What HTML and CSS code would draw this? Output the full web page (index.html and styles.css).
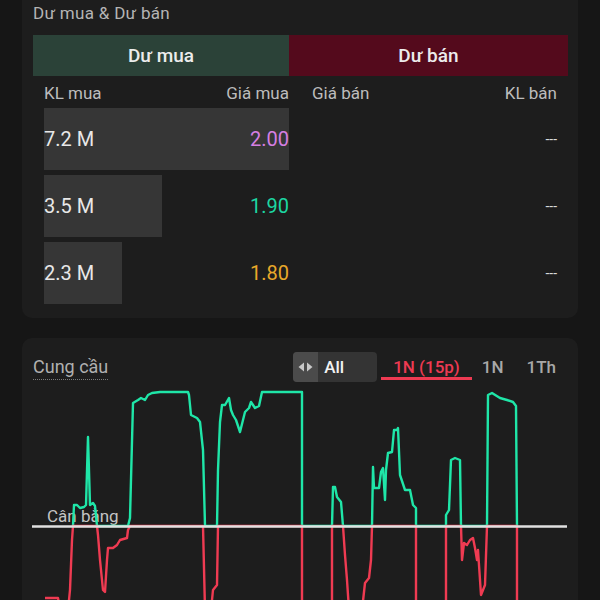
FILE: index.html
```html
<!DOCTYPE html>
<html lang="vi">
<head>
  <meta charset="UTF-8">
  <meta name="viewport" content="width=device-width, initial-scale=1.0">
  <title>Dư mua & Dư bán</title>
  <link rel="stylesheet" href="styles.css">
</head>
<body>
  <div class="page">
    <section class="card depth">
      <h2 class="card-title">Dư mua &amp; Dư bán</h2>
      <div class="side-tabs">
        <div class="side-tab buy">Dư mua</div>
        <div class="side-tab sell">Dư bán</div>
      </div>
      <div class="book">
        <div class="book-head">
          <span>KL mua</span>
          <span>Giá mua</span>
        </div>
        <div class="book-head">
          <span>Giá bán</span>
          <span>KL bán</span>
        </div>

        <div class="book-row">
          <div class="bar" style="width: 100%"></div>
          <div class="row-text">
            <span class="vol">7.2 M</span>
            <span class="price violet">2.00</span>
          </div>
        </div>
        <div class="book-row empty">
          <span></span>
          <span class="dash">---</span>
        </div>

        <div class="book-row">
          <div class="bar" style="width: 48%"></div>
          <div class="row-text">
            <span class="vol">3.5 M</span>
            <span class="price teal">1.90</span>
          </div>
        </div>
        <div class="book-row empty">
          <span></span>
          <span class="dash">---</span>
        </div>

        <div class="book-row">
          <div class="bar" style="width: 32%"></div>
          <div class="row-text">
            <span class="vol">2.3 M</span>
            <span class="price amber">1.80</span>
          </div>
        </div>
        <div class="book-row empty">
          <span></span>
          <span class="dash">---</span>
        </div>
      </div>
    </section>

    <section class="card flow">
      <div class="flow-head">
        <span class="flow-title">Cung cầu</span>
        <div class="controls">
          <div class="toggle">
            <span class="toggle-arrows">
              <svg width="17" height="10" viewBox="0 0 17 10">
                <path d="M7 0.5 L1.5 5 L7 9.5 Z" fill="#c9c9c9"/>
                <path d="M10 0.5 L15.5 5 L10 9.5 Z" fill="#c9c9c9"/>
              </svg>
            </span>
            <span class="toggle-label">All</span>
          </div>
          <span class="range active">1N (15p)</span>
          <span class="range day">1N</span>
          <span class="range month">1Th</span>
        </div>
      </div>
      <svg class="chart" width="556" height="230" viewBox="22 384 556 230">
        <text x="47" y="522" class="chart-label">Cân bằng</text>
        <path class="line-buy" d="M73,526 L74,505 L77,505 L80,508 L84,507 L86,505 L88,437 L90,505 L93,503 L95,506 L97,526 L128,526 L130,518 L133,403 L138,400 L141,398 L145,400 L148,395 L152,393 L160,392 L188,392 L189,395 L191,415 L197,418 L200,422 L203,450 L205,526 L217,526 L218,470 L220,422 L222,405 L225,405 L229,398 L231,410 L233,415 L236,420 L240,432 L243,420 L245,412 L249,408 L251,402 L255,408 L259,406 L262,392 L302,392 L302,526 L332,526 L333,487 L335,487 L337,497 L341,502 L343,526 L372,526 L373,467 L374,488 L379,488 L381,472 L383,468 L385,500 L386,470 L388,453 L392,452 L394,430 L397,430 L398,428 L400,475 L405,490 L410,490 L413,505 L416,508 L416,526 L446,526 L446,515 L449,510 L451,460 L455,458 L460,460 L461,526 L487,526 L488,395 L492,393 L500,398 L507,400 L513,402 L516,406 L517,526"/>
        <path class="line-sell" d="M45,598 L58,598 L60,610"/>
        <path class="line-sell" d="M68,610 L70,590 L72,540 L73,526 L97,526 L98,535 L100,560 L103,590 L105,592 L107,560 L108,548 L113,548 L117,545 L120,540 L127,538 L128,530 L130,526 L203,526 L205,610 L211,610 L213,590 L217,585 L218,526 L302,526 L302,610 L332,610 L332,526 L343,526 L345,555 L347,580 L349,610 L362,610 L365,583 L369,578 L371,560 L372,526 L416,526 L416,610 L446,610 L446,526 L461,526 L462,560 L464,543 L467,545 L470,540 L473,538 L475,548 L477,560 L478,550 L480,580 L481,595 L483,590 L485,585 L487,526 L517,526 L517,610"/>
        <line x1="32" y1="526.5" x2="567" y2="526.5" class="baseline"/>
      </svg>
    </section>
  </div>
</body>
</html>
```

FILE: styles.css
```css
body {
  margin: 0;
  background: #161616;
  font-family: Roboto, 'Noto Sans', sans-serif;
  color: #e6e6e6;
}
.page {
  padding: 0 22px;
}
.card {
  background: #1d1d1d;
}
.depth {
  padding: 0 10px 14px 11px;
  border-radius: 0 0 10px 10px;
}
.card-title {
  margin: 0;
  font-size: 17px;
  font-weight: 400;
  line-height: 26px;
  letter-spacing: 0.3px;
  color: #b4b4b4;
}
.side-tabs {
  display: grid;
  grid-template-columns: 256px 1fr;
  margin-top: 9px;
}
.side-tab {
  height: 41px;
  line-height: 41px;
  text-align: center;
  font-size: 19px;
  font-weight: 500;
  color: #ececec;
}
.side-tab.buy {
  background: #2b4238;
}
.side-tab.sell {
  background: #540a1c;
}
.book {
  display: grid;
  grid-template-columns: 245px 245px;
  column-gap: 23px;
  row-gap: 5px;
  padding: 0 12px 0 11px;
}
.book-head {
  display: flex;
  justify-content: space-between;
  height: 22px;
  line-height: 22px;
  margin: 6px 0 -1px;
  font-size: 17px;
  color: #bcbcbc;
}
.book-row {
  display: grid;
  height: 62px;
}
.book-row > .bar,
.book-row > .row-text {
  grid-area: 1 / 1;
}
.bar {
  background: #363636;
  height: 100%;
}
.row-text {
  display: flex;
  justify-content: space-between;
  align-items: center;
  font-size: 20px;
}
.vol {
  color: #e8e8e8;
}
.violet { color: #d57fe3; }
.teal { color: #1cd6a2; }
.amber { color: #e8a82a; }
.book-row.empty {
  grid-template-columns: 1fr auto;
  align-items: center;
}
.dash {
  font-size: 14px;
  color: #d8d8d8;
}
.flow {
  margin-top: 20px;
  padding: 14px 10px 0 11px;
  border-radius: 10px 10px 0 0;
}
.flow-head {
  display: flex;
  justify-content: space-between;
  align-items: flex-start;
  height: 30px;
}
.flow-title {
  margin-top: 3px;
  font-size: 18px;
  line-height: 24px;
  color: #b0b0b0;
  border-bottom: 1px dotted #7a7a7a;
}
.controls {
  display: flex;
  align-items: flex-start;
}
.toggle {
  display: flex;
  width: 84px;
  height: 30px;
  margin-right: 4px;
  border-radius: 4px;
  background: #343434;
  overflow: hidden;
}
.toggle-arrows {
  display: flex;
  align-items: center;
  justify-content: center;
  width: 25px;
  background: #4b4b4b;
}
.toggle-label {
  padding-left: 6px;
  line-height: 30px;
  font-size: 17px;
  font-weight: 500;
  color: #f2f2f2;
}
.range {
  margin-top: 5px;
  padding: 0 12px;
  line-height: 20px;
  font-size: 17px;
  font-weight: 500;
  color: #a8a8a8;
  border-bottom: 3px solid transparent;
}
.range.day {
  padding: 0 11px 0 10px;
}
.range.active {
  color: #ee3a52;
  border-bottom-color: #ee3a52;
}
.chart {
  display: block;
  margin: 2px 0 0 -11px;
}
.chart-label {
  font-family: Roboto, sans-serif;
  font-size: 17px;
  fill: #c4c4c4;
}
.line-buy,
.line-sell {
  fill: none;
  stroke-width: 2.4;
  stroke-linejoin: round;
}
.line-buy {
  stroke: #1fe6a8;
}
.line-sell {
  stroke: #ef3b52;
}
.baseline {
  stroke: #e0e0e0;
  stroke-width: 2.6;
}
```
